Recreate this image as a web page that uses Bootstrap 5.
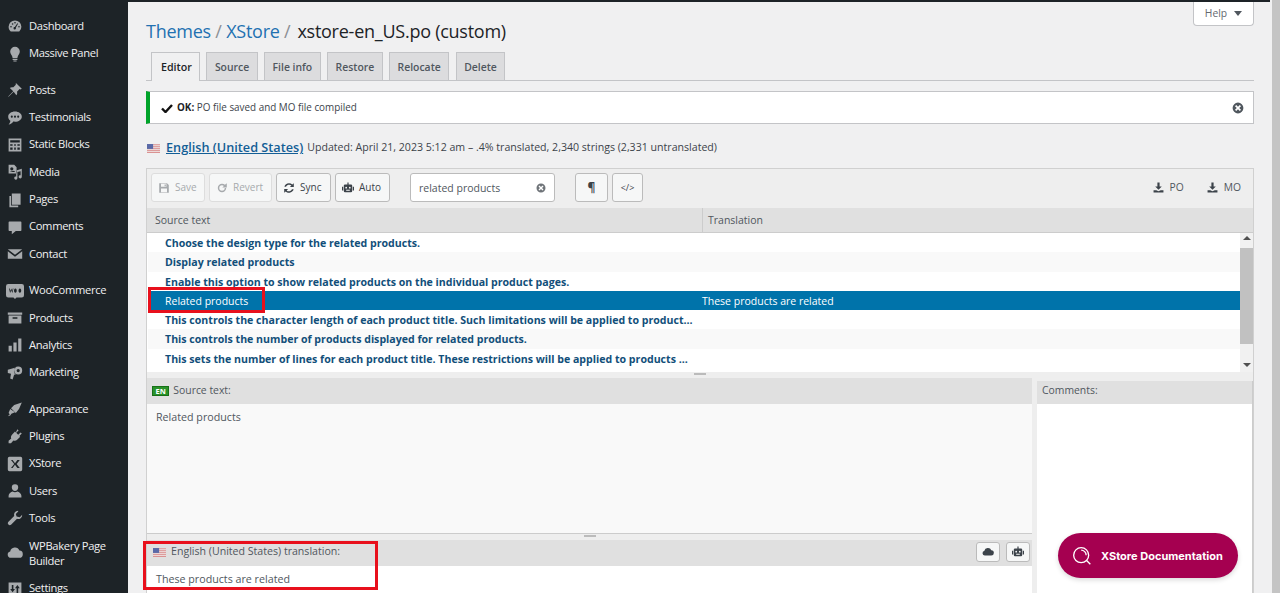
<!DOCTYPE html>
<html lang="en"><head><meta charset="utf-8"><title>Loco Translate</title>
<link href="https://cdn.jsdelivr.net/npm/bootstrap@5.3.0/dist/css/bootstrap.min.css" rel="stylesheet">
<style>
html,body{height:593px;overflow:hidden}
body{background:#f0f0f1;font-family:"Open Sans","Noto Sans",sans-serif;font-size:12px;color:#3c434a}
.topline{height:2px;background:#1d2327;margin-right:10px}
.shell{height:591px}
.wpnav{width:128px;background:#1d2327;padding-top:10.800px;flex:none;overflow:hidden}
.wpitem{height:27.35px;padding-left:7px;gap:6px;color:#f0f0f1;font-size:11.2px;letter-spacing:-.33px;white-space:nowrap}
.wpitem svg{width:16px;height:16px;fill:#a7aaad;flex:none}
.wpitem svg.wide{width:18px;margin:0 -1px}
.wpitem.dbl{height:43px;white-space:normal;line-height:15px;align-items:center}
.wpgap{height:9px}
.mainarea{width:1144px;padding:0 18px;flex:none;position:relative}
.pagebar{width:8px;background:#c4c4c4;flex:none;margin-top:-2px;height:593px}
.titlerow{height:50px;padding-top:15px}
.ttl{font-size:18px;letter-spacing:-.25px;line-height:28px;color:#1d2327;white-space:nowrap}
.ttl a{color:#2271b1;text-decoration:none}
.ttl i{font-style:normal;color:#8c8f94}
.fname{margin-left:2.500px}
.helpbtn{background:#fff;border:1px solid #c3c4c7;border-top:0;border-radius:0 0 4px 4px;width:61px;height:24px;color:#646970;font-size:10.300px;margin-top:-15px;gap:7px}
.tri{width:0;height:0;border:4px solid transparent;border-top:5px solid #50575e;border-bottom:0}
.tabbar{height:29px;border-bottom:1px solid #c3c4c7;gap:6.400px;padding-left:5px}
.tabitem{height:28px;background:#dcdcde;border:1px solid #c3c4c7;border-bottom:0;color:#50575e;font-size:10.400px;font-weight:600;padding:0 7.500px;line-height:28px;white-space:nowrap}
.tabitem.on{background:#f0f0f1;color:#1d2327;height:29px;margin-bottom:-1px;font-size:10.700px;padding:0 8px 0 9px;width:49px}
.noticebox{height:33px;margin-top:10px;background:#fff;border:1px solid #c3c4c7;border-left:4px solid #00a32a;padding:0 9px 0 11px;font-size:9.900px;gap:4px}
.noticebox b{font-weight:700;color:#1d2327}
.langrow{height:44px;padding-top:4px;gap:4px;white-space:nowrap;font-size:10.600px;padding-left:1px}
.langrow a{font-size:12.700px;font-weight:600;color:#135e96;margin-left:2px}
.editorbox{border:1px solid #d0d0d0;border-bottom:0;height:425px;background:#eee}
.toolrow{height:39px;padding:0 12px 2px 4px;gap:4px}
.tbtn{height:29px;border:1px solid #bbb;border-radius:3px;background:#f6f7f7;color:#3c434a;font-size:10px;gap:5px;padding:0 6px;white-space:nowrap;flex:none}
.tbtn.off{border-color:#ddd;color:#a7aaad}
.tbtn svg{width:12px;height:12px;fill:currentColor;flex:none}
.wsave{width:54px}.wrevert{width:63px}.wsync{width:55px}.wauto{width:55px}.wpara{width:33px;font-size:12px}.wcode{width:31px;font-size:9px}
.srch{width:145px;height:29px;background:#fff;border:1px solid #bbb;border-radius:3px;margin-left:16px;margin-right:16px;padding:0 8px;font-size:10.500px;color:#50575e;flex:none}
.srch span{padding-top:2px}
.dl{gap:6px;color:#50575e;font-size:10.300px;margin-left:19px}
.dl svg{width:11px;height:11px;fill:#3c434a}
.headrow{height:25px;background:#e0e0e0;border-bottom:1px solid #ccc;font-size:10.500px;color:#50575e}
.hc1{width:556px;padding-left:8px;border-right:1px solid #ccc;height:100%;line-height:24px}
.hc2{padding-left:5px;line-height:24px}
.listwrap{height:139px;background:#fff}
.rows{flex:1;min-width:0;padding-left:1px}
.srow{height:19.3px;line-height:20px;padding-left:17px;font-size:10.600px;font-weight:700;color:#124f7a;white-space:nowrap;overflow:hidden}
.srow.alt{background:#f9f9f9}
.srow.sel{background:#0073aa;color:#fff;font-weight:400;display:flex;font-size:10.500px}
.srow.sel span:first-child{width:537px}
.vbar{width:13px;background:#f1f1f1;flex:none;padding:3px 0}
.thumb{height:96px;background:#c1c1c1;margin-top:8px}
.arr{width:0;height:0;border:4px solid transparent;margin:0 auto}
.arr.up{border-bottom:4px solid #505050;border-top:0}
.arr.dn{border-top:4px solid #505050;border-bottom:0;margin-top:19px}
.split{height:5px;background:#eee}
.grip{width:12px;height:2px;border-top:1px solid #bbb;border-bottom:1px solid #bbb;margin:1px auto 0}
.panes{height:216px;gap:5px}
.leftpane{width:885px;flex:none}
.panehead{height:26px;background:#e0e0e0;font-size:10.400px;color:#50575e;padding-left:5px;gap:4px}
.enbadge{background:#2a922a;color:#fff;font-size:7.500px;font-weight:700;padding:0 2.500px;line-height:8px;border:1px solid #177017}
.srcbody{height:130px;background:#f9f9f9;padding:5px 9px;font-size:10.700px;color:#50575e;border-bottom:1px solid #ccc}
.split2{height:5px;background:#eee}
.tranhead{height:26px;background:#e0e0e0;font-size:10.600px;color:#50575e;padding:0 0 2px 6px;gap:5px}
.tranbody{height:40px;background:#fff;padding:5px 9px;font-size:10.700px;color:#50575e}
.minibtn{width:24px;height:20px;background:#f6f7f7;border:1px solid #bbb;border-radius:3px;margin:0 2px 0 -1px}
.minibtn svg{width:12px;height:12px;fill:#3c434a}
.rightpane{flex:1;margin-top:3px;background:#fff;border-right:1px solid #ccc}
.rightpane .panehead{height:23px;padding:0 0 3px 5px}
.redmark{position:absolute;border:3px solid #e8101c;pointer-events:none}
.rm1{left:20px;top:285px;width:117px;height:26px}
.rm2{left:15px;top:539px;width:235px;height:49px}
.docbtn{position:absolute;left:930px;top:531px;width:180px;height:45px;border-radius:23px;background:#a50050;color:#fff;font-family:"Inter",sans-serif;font-weight:700;font-size:11px;padding-left:14px;gap:9px;box-shadow:0 2px 5px rgba(0,0,0,.15);white-space:nowrap}
.docbtn span{padding-top:2px}
.docbtn svg{width:20px;height:20px;fill:none;stroke:#fff;stroke-width:1.6;flex:none}
</style></head><body>
<svg width="0" height="0" class="position-absolute"><defs>
<symbol id="i-dash" viewBox="0 0 20 20"><path d="M10 3a8 8 0 0 0-8 8c0 2.500 1 4.500 2.700 6h10.600A8 8 0 0 0 18 11a8 8 0 0 0-8-8zm0 2a1 1 0 1 1 0 2 1 1 0 0 1 0-2zM5 10a1 1 0 1 1 0 2 1 1 0 0 1 0-2zm10 0a1 1 0 1 1 0 2 1 1 0 0 1 0-2zM7 6.500a1 1 0 1 1 0 2 1 1 0 0 1 0-2zm6 0 .8.6-2.800 5.100a1.500 1.500 0 1 1-1.200-.8z"/></symbol>
<symbol id="i-bulb" viewBox="0 0 20 20"><path d="M10 1a6 6 0 0 0-6 6c0 2.500 1.500 4 2.300 5.500.4.800.5 1.500.7 2.500h6c.2-1 .3-1.700.7-2.500C14.500 11 16 9.500 16 7a6 6 0 0 0-6-6zM7 16h6v1.500H7zm1 2.200h4V19.500H8z"/></symbol>
<symbol id="i-pin" viewBox="0 0 20 20"><path d="M11.500 1.500 18.500 8.500l-1.500.8-1.300-.4-3.200 3.200c.6 1.700.2 3.300-.8 4.400L8.300 12.200 2 18.500 1.500 18l6.300-6.300-4.300-4.200c1.100-1 2.700-1.400 4.400-.8l3.200-3.200-.4-1.300z"/></symbol>
<symbol id="i-chat" viewBox="0 0 20 20"><path fill-rule="evenodd" d="M10 2c4.700 0 8.500 2.800 8.500 6.300s-3.800 6.300-8.500 6.300c-.8 0-1.500-.1-2.200-.2C6.500 16.500 4.500 18 2 18c1.200-1 2-2.500 2.200-4.500C2.500 12.300 1.500 10.400 1.500 8.300 1.500 4.800 5.300 2 10 2zM6 7a1.300 1.300 0 1 0 0 2.600A1.300 1.300 0 0 0 6 7zm4 0a1.300 1.300 0 1 0 0 2.600A1.300 1.300 0 0 0 10 7zm4 0a1.300 1.300 0 1 0 0 2.600A1.300 1.300 0 0 0 14 7z"/></symbol>
<symbol id="i-grid" viewBox="0 0 20 20"><path fill-rule="evenodd" d="M2 2h16v16H2zm2 2v3h12V4zm0 5v2h3V9zm5 0v2h2V9zm4 0v2h3V9zm-9 4v3h3v-3zm5 0v3h2v-3zm4 0v3h3v-3z"/></symbol>
<symbol id="i-media" viewBox="0 0 20 20"><path fill-rule="evenodd" d="M2 1h7l3 3v8H2zm4 3a2 2 0 1 0 0 4 2 2 0 0 0 0-4zM4 10h6v-.5L7.500 8.500 6 9.500 5 9zM18.500 6v10a2 2 0 1 1-1.500-1.900V9l-4 1v7.500a2 2 0 1 1-1.500-1.900V8z"/></symbol>
<symbol id="i-pages" viewBox="0 0 20 20"><path d="M6 2h11v14H6zM3 5h2v12h9v2H3z"/></symbol>
<symbol id="i-cmt" viewBox="0 0 20 20"><path d="M3 3h14a1 1 0 0 1 1 1v10a1 1 0 0 1-1 1h-6l-5 4v-4H3a1 1 0 0 1-1-1V4a1 1 0 0 1 1-1z"/></symbol>
<symbol id="i-mail" viewBox="0 0 20 20"><path d="M1 4h18L10 11zM1 6.500l9 7 9-7V16H1z"/></symbol>
<symbol id="i-woo" viewBox="0 0 24 21"><path fill-rule="evenodd" d="M3 1h18a3 3 0 0 1 3 3v12a3 3 0 0 1-3 3h-7l-2 2-2-2H3a3 3 0 0 1-3-3V4a3 3 0 0 1 3-3zm1 6 1.500 6L7 9.500 8.500 13 10 7H9l-.7 3.500L7 7l-1.300 3.500L5 7zm8.500 0a1.800 3 0 1 0 .01 0zm6 0a1.800 3 0 1 0 .01 0z"/></symbol>
<symbol id="i-box" viewBox="0 0 20 20"><path fill-rule="evenodd" d="M1 3h18v3H1zm1 4h16v10H2zm5 2v2h6V9z"/></symbol>
<symbol id="i-bars" viewBox="0 0 20 20"><path d="M2 11h4v7H2zm6-4h4v11H8zm6-5h4v16h-4z"/></symbol>
<symbol id="i-mega" viewBox="0 0 20 20"><path fill-rule="evenodd" d="M14 2a5 5 0 1 1 0 10 5 5 0 0 1 0-10zm0 3a2 2 0 1 0 0 4 2 2 0 0 0 0-4zM11 3 1 6v4l4 1-1 6 3 1 2-6 2 .5A6 6 0 0 1 11 3z"/></symbol>
<symbol id="i-brush" viewBox="0 0 20 20"><path d="M18.500 2 9 5 5 9l6 6 4-5zM4 10l-2 5 1.500 1.500L1 19l3-1 1.500-2 4.500-2z"/></symbol>
<symbol id="i-plug" viewBox="0 0 20 20"><path d="M13 1.500l1.500 1.500-3 3 2.500 2.500 3-3L18.500 7l-3 3 1 1-3.500 3.500c-1.500 1.500-3.500 2-5 1.200L5 19H2v-3l3.300-3C4.500 11.500 5 9.500 6.500 8L10 4.500l1 1z"/></symbol>
<symbol id="i-x" viewBox="0 0 20 20"><path fill-rule="evenodd" d="M3 1h14a2 2 0 0 1 2 2v14a2 2 0 0 1-2 2H3a2 2 0 0 1-2-2V3a2 2 0 0 1 2-2zm2 4 4 5-4 5h2l3-4 3 4h3l-4-5 4-5h-3l-3 4-3-4z"/></symbol>
<symbol id="i-user" viewBox="0 0 20 20"><path d="M10 1.500a4 4 0 0 1 4 4.200c0 2.300-1.800 4.300-4 4.300S6 8 6 5.700a4 4 0 0 1 4-4.200zM2 16c0-3 3-5 5-5.500.8.700 1.900 1 3 1s2.200-.3 3-1c2 .5 5 2.500 5 5.500v2H2z"/></symbol>
<symbol id="i-wrench" viewBox="0 0 20 20"><path d="M14 1a5 5 0 0 0-5 6.500L1.500 15a2.500 2.500 0 0 0 3.500 3.500L12.500 11A5 5 0 0 0 19 6l-3 3-4-1-1-3 3-3z"/></symbol>
<symbol id="i-cloud" viewBox="0 0 20 20"><path d="M5 16a4 4 0 0 1-1-7.900A6 6 0 0 1 15.500 7 4.500 4.500 0 0 1 15 16z"/></symbol>
<symbol id="i-sliders" viewBox="0 0 20 20"><path fill-rule="evenodd" d="M2 2h16v16H2zm4 3v5H4l3 4 3-4H8V5zm7 0-3 4h2v6h2V9h2z"/></symbol>
<symbol id="i-bot" viewBox="0 0 20 20"><path fill-rule="evenodd" d="M9 1h2v3h4a2 2 0 0 1 2 2v9a2 2 0 0 1-2 2H5a2 2 0 0 1-2-2V6a2 2 0 0 1 2-2h4zM7 8a1.500 1.500 0 1 0 0 3 1.500 1.500 0 0 0 0-3zm6 0a1.500 1.500 0 1 0 0 3 1.500 1.500 0 0 0 0-3zM7 13v1.500h6V13zM0 8h2v6H0zm18 0h2v6h-2z"/></symbol>
<symbol id="i-dl" viewBox="0 0 20 20"><path d="M8 1h4v7h4l-6 6-6-6h4zM1 15h5l4 2 4-2h5v4H1z"/></symbol>
<symbol id="i-xc" viewBox="0 0 20 20"><path fill-rule="evenodd" d="M10 1a9 9 0 1 1 0 18 9 9 0 0 1 0-18zM7 5 5 7l3 3-3 3 2 2 3-3 3 3 2-2-3-3 3-3-2-2-3 3z"/></symbol>
<symbol id="i-flag" viewBox="0 0 16 11"><rect width="16" height="11" fill="#d98f8f"/><path d="M0 1.500h16M0 4h16M0 6.500h16M0 9h16" stroke="#f2f2f2" stroke-width="1.100"/><rect width="7.500" height="6" fill="#5a6aa8"/></symbol>
</defs></svg>
<div class="topline"></div>
<div class="shell d-flex">
  <nav class="wpnav">
    <div class="wpitem d-flex align-items-center"><svg><use href="#i-dash"/></svg><span>Dashboard</span></div>
    <div class="wpitem d-flex align-items-center"><svg><use href="#i-bulb"/></svg><span>Massive Panel</span></div>
    <div class="wpgap"></div>
    <div class="wpitem d-flex align-items-center"><svg><use href="#i-pin"/></svg><span>Posts</span></div>
    <div class="wpitem d-flex align-items-center"><svg><use href="#i-chat"/></svg><span>Testimonials</span></div>
    <div class="wpitem d-flex align-items-center"><svg><use href="#i-grid"/></svg><span>Static Blocks</span></div>
    <div class="wpitem d-flex align-items-center"><svg><use href="#i-media"/></svg><span>Media</span></div>
    <div class="wpitem d-flex align-items-center"><svg><use href="#i-pages"/></svg><span>Pages</span></div>
    <div class="wpitem d-flex align-items-center"><svg><use href="#i-cmt"/></svg><span>Comments</span></div>
    <div class="wpitem d-flex align-items-center"><svg><use href="#i-mail"/></svg><span>Contact</span></div>
    <div class="wpgap"></div>
    <div class="wpitem d-flex align-items-center"><svg class="wide"><use href="#i-woo"/></svg><span>WooCommerce</span></div>
    <div class="wpitem d-flex align-items-center"><svg><use href="#i-box"/></svg><span>Products</span></div>
    <div class="wpitem d-flex align-items-center"><svg><use href="#i-bars"/></svg><span>Analytics</span></div>
    <div class="wpitem d-flex align-items-center"><svg><use href="#i-mega"/></svg><span>Marketing</span></div>
    <div class="wpgap"></div>
    <div class="wpitem d-flex align-items-center"><svg><use href="#i-brush"/></svg><span>Appearance</span></div>
    <div class="wpitem d-flex align-items-center"><svg><use href="#i-plug"/></svg><span>Plugins</span></div>
    <div class="wpitem d-flex align-items-center"><svg><use href="#i-x"/></svg><span>XStore</span></div>
    <div class="wpitem d-flex align-items-center"><svg><use href="#i-user"/></svg><span>Users</span></div>
    <div class="wpitem d-flex align-items-center"><svg><use href="#i-wrench"/></svg><span>Tools</span></div>
    <div class="wpitem dbl d-flex"><svg class="wide"><use href="#i-cloud"/></svg><span>WPBakery Page Builder</span></div>
    <div class="wpitem d-flex align-items-center"><svg><use href="#i-sliders"/></svg><span>Settings</span></div>
  </nav>
  <main class="mainarea">
    <div class="titlerow d-flex justify-content-between align-items-start">
      <div class="ttl"><a href="#">Themes</a> <i>/</i> <a href="#">XStore</a> <i>/</i> <span class="fname">xstore-en_US.po (custom)</span></div>
      <div class="helpbtn d-flex align-items-center justify-content-center">Help <span class="tri"></span></div>
    </div>
    <div class="tabbar d-flex">
      <div class="tabitem on">Editor</div><div class="tabitem">Source</div><div class="tabitem">File info</div><div class="tabitem">Restore</div><div class="tabitem">Relocate</div><div class="tabitem">Delete</div>
    </div>
    <div class="noticebox d-flex align-items-center">
      <svg width="12" height="10" viewBox="0 0 12 10"><path d="M1 5.500 4.500 9 11 2" fill="none" stroke="#111" stroke-width="2.400"/></svg>
      <span><b>OK:</b> PO file saved and MO file compiled</span>
      <svg class="ms-auto" width="12" height="12" viewBox="0 0 20 20" fill="#50575e"><use href="#i-xc"/></svg>
    </div>
    <div class="langrow d-flex align-items-center">
      <svg width="13" height="9"><use href="#i-flag"/></svg>
      <a href="#">English (United States)</a>
      <span>Updated: April 21, 2023 5:12 am – .4% translated, 2,340 strings (2,331 untranslated)</span>
    </div>
    <section class="editorbox">
      <div class="toolrow d-flex align-items-center">
        <div class="tbtn wsave off d-flex align-items-center"><svg viewBox="0 0 20 20"><path fill-rule="evenodd" d="M2 2h13l3 3v13H2zm3 1v5h9V3zm6 1h2v3h-2zM5 11v6h10v-6z"/></svg>Save</div>
        <div class="tbtn wrevert off d-flex align-items-center"><svg viewBox="0 0 20 20"><path d="M10 3a7 7 0 1 0 7 7h-2.500A4.500 4.500 0 1 1 10 5.500c1.200 0 2.300.5 3.100 1.300L10.500 9H18V2l-3.100 2.700A7 7 0 0 0 10 3z"/></svg>Revert</div>
        <div class="tbtn wsync d-flex align-items-center"><svg viewBox="0 0 20 20"><path d="M10 2a8 8 0 0 1 5.500 2.200L18 2v6.500h-6.500L14 6a5.500 5.500 0 0 0-9 2H2.300A8 8 0 0 1 10 2zM2 11.500h6.500L6 14a5.500 5.500 0 0 0 9-2h2.700A8 8 0 0 1 4.500 15.800L2 18z"/></svg>Sync</div>
        <div class="tbtn wauto d-flex align-items-center"><svg viewBox="0 0 20 20"><use href="#i-bot"/></svg>Auto</div>
        <div class="srch d-flex align-items-center justify-content-between"><span>related products</span><svg width="10" height="10" viewBox="0 0 20 20" fill="#6f7479"><use href="#i-xc"/></svg></div>
        <div class="tbtn wpara d-flex align-items-center justify-content-center fw-bold">¶</div>
        <div class="tbtn wcode d-flex align-items-center justify-content-center"><span>&lt;/&gt;</span></div>
        <div class="dl d-flex align-items-center ms-auto"><svg viewBox="0 0 20 20"><use href="#i-dl"/></svg><span>PO</span></div>
        <div class="dl d-flex align-items-center"><svg viewBox="0 0 20 20"><use href="#i-dl"/></svg><span>MO</span></div>
      </div>
      <div class="headrow d-flex"><div class="hc1">Source text</div><div class="hc2">Translation</div></div>
      <div class="listwrap d-flex">
        <div class="rows">
          <div class="srow">Choose the design type for the related products.</div>
          <div class="srow alt">Display related products</div>
          <div class="srow">Enable this option to show related products on the individual product pages.</div>
          <div class="srow sel"><span>Related products</span><span>These products are related</span></div>
          <div class="srow">This controls the character length of each product title. Such limitations will be applied to product...</div>
          <div class="srow alt">This controls the number of products displayed for related products.</div>
          <div class="srow">This sets the number of lines for each product title. These restrictions will be applied to products ...</div>
        </div>
        <div class="vbar"><div class="arr up"></div><div class="thumb"></div><div class="arr dn"></div></div>
      </div>
      <div class="split"><div class="grip"></div></div>
      <div class="panes d-flex">
        <div class="leftpane">
          <div class="panehead d-flex align-items-center"><span class="enbadge">EN</span>Source text:</div>
          <div class="srcbody">Related products</div>
          <div class="split2"><div class="grip"></div></div>
          <div class="tranhead d-flex align-items-center"><svg width="13" height="9"><use href="#i-flag"/></svg>English (United States) translation:
            <span class="minibtn d-flex align-items-center justify-content-center ms-auto"><svg viewBox="0 0 20 20"><use href="#i-cloud"/></svg></span>
            <span class="minibtn d-flex align-items-center justify-content-center"><svg viewBox="0 0 20 20"><use href="#i-bot"/></svg></span>
          </div>
          <div class="tranbody">These products are related</div>
        </div>
        <div class="rightpane"><div class="panehead d-flex align-items-center">Comments:</div></div>
      </div>
    </section>
    <div class="redmark rm1"></div>
    <div class="redmark rm2"></div>
    <div class="docbtn d-flex align-items-center"><svg viewBox="0 0 24 24"><circle cx="11" cy="11" r="9"/><path d="M17.500 17.500 22 22M11 5a6 6 0 0 1 6 6"/></svg><span>XStore Documentation</span></div>
  </main>
  <div class="pagebar"></div>
</div>
</body></html>
